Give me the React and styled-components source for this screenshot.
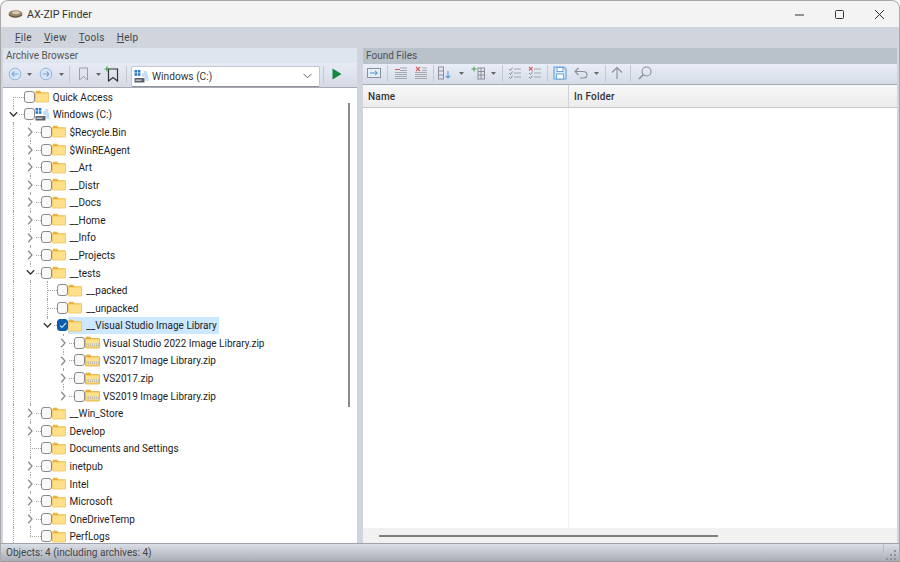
import React from "react"
import styled, { createGlobalStyle } from "styled-components"

const GlobalStyle = createGlobalStyle`
    html, body {
        margin: 0;
        padding: 0;
        background: #fff;
    }
    body {
        font-family: Roboto, "Noto Sans", sans-serif;
        font-size: 10px;
        color: #333;
    }
`

const rows = [
    { name: "Quick Access", level: 0, node: "line", icon: "folder", guides: [] },
    { name: "Windows (C:)", level: 0, node: "open", icon: "drive", guides: [] },
    { name: "$Recycle.Bin", level: 1, node: "closed", icon: "folder", guides: [1] },
    { name: "$WinREAgent", level: 1, node: "closed", icon: "folder", guides: [1] },
    { name: "__Art", level: 1, node: "closed", icon: "folder", guides: [1] },
    { name: "__Distr", level: 1, node: "closed", icon: "folder", guides: [1] },
    { name: "__Docs", level: 1, node: "closed", icon: "folder", guides: [1] },
    { name: "__Home", level: 1, node: "closed", icon: "folder", guides: [1] },
    { name: "__Info", level: 1, node: "closed", icon: "folder", guides: [1] },
    { name: "__Projects", level: 1, node: "closed", icon: "folder", guides: [1] },
    { name: "__tests", level: 1, node: "open", icon: "folder", guides: [1] },
    { name: "__packed", level: 2, node: "line", icon: "folder", guides: [1, 1] },
    { name: "__unpacked", level: 2, node: "line", icon: "folder", guides: [1, 1] },
    { name: "__Visual Studio Image Library", level: 2, node: "open", icon: "folder", guides: [1, 1], checked: true, selected: true, tail: true },
    { name: "Visual Studio 2022 Image Library.zip", level: 3, node: "closed", icon: "zip", guides: [1, 1, 0] },
    { name: "VS2017 Image Library.zip", level: 3, node: "closed", icon: "zip", guides: [1, 1, 0] },
    { name: "VS2017.zip", level: 3, node: "closed", icon: "zip", guides: [1, 1, 0] },
    { name: "VS2019 Image Library.zip", level: 3, node: "closed", icon: "zip", guides: [1, 1, 0], tail: true },
    { name: "__Win_Store", level: 1, node: "closed", icon: "folder", guides: [1] },
    { name: "Develop", level: 1, node: "closed", icon: "folder", guides: [1] },
    { name: "Documents and Settings", level: 1, node: "line", icon: "folder", guides: [1] },
    { name: "inetpub", level: 1, node: "closed", icon: "folder", guides: [1] },
    { name: "Intel", level: 1, node: "closed", icon: "folder", guides: [1] },
    { name: "Microsoft", level: 1, node: "closed", icon: "folder", guides: [1] },
    { name: "OneDriveTemp", level: 1, node: "closed", icon: "folder", guides: [1] },
    { name: "PerfLogs", level: 1, node: "line", icon: "folder", guides: [1] },
]

function FolderIcon() {
    return (
        <svg width="14" height="13" viewBox="0 0 14 13">
            <path d="M0.5 2.5 Q0.5 1 2 1 H5 L6.5 2.5 H13 Q13.5 2.5 13.5 3 V11.5 Q13.5 12 13 12 H1 Q0.5 12 0.5 11.5 Z" fill="#fbd268" stroke="#efc260" strokeWidth="0.8" />
            <path d="M1 1.5 H5 L6.5 3 H1 Z" fill="#eba92e" />
            <rect x="1" y="4" width="12" height="7.5" fill="#fedf8a" />
        </svg>
    )
}

function ZipIcon() {
    return (
        <svg width="15" height="13" viewBox="0 0 15 13">
            <path d="M0.5 2.5 Q0.5 1 2 1 H5 L6.5 2.5 H14 Q14.5 2.5 14.5 3 V11.5 Q14.5 12 14 12 H1 Q0.5 12 0.5 11.5 Z" fill="#fbd268" stroke="#e3ad42" strokeWidth="0.8" />
            <path d="M1 1.5 H5 L6.5 3 H1 Z" fill="#e8a62c" />
            <rect x="1" y="4" width="13" height="3" fill="#fedf8a" />
            <rect x="3" y="7" width="11" height="3.5" fill="#e8e2c8" />
            <path d="M3 8 H14 M3 9.6 H14" stroke="#9a9686" strokeWidth="0.7" strokeDasharray="1 1" />
        </svg>
    )
}

function DriveIcon({ size = 15 }) {
    return (
        <svg width={size} height={size} viewBox="0 0 15 15">
            <rect x="0.5" y="1" width="2.6" height="2.6" fill="#2b79c9" />
            <rect x="3.8" y="1" width="2.6" height="2.6" fill="#2b79c9" />
            <rect x="0.5" y="4.2" width="2.6" height="2.6" fill="#2b79c9" />
            <rect x="3.8" y="4.2" width="2.6" height="2.6" fill="#2b79c9" />
            <rect x="0.5" y="9" width="10" height="4.5" fill="#59626c" />
            <rect x="1.5" y="10.6" width="6" height="1.2" fill="#cfd6dd" />
            <path d="M8 5 H13.5 M8 7 H14 M10 3 H13 M11 9 H14.5 M11.5 11 H14.5" stroke="#8fc0e6" strokeWidth="1.2" />
        </svg>
    )
}

function Chevron({ open }) {
    return open ? (
        <svg width="9" height="7" viewBox="0 0 9 7">
            <path d="M0.8 1.2 L4.5 5 L8.2 1.2" fill="none" stroke="#333" strokeWidth="1.3" />
        </svg>
    ) : (
        <svg width="7" height="10" viewBox="0 0 7 10">
            <path d="M1.2 0.8 L5 5 L1.2 9.2" fill="none" stroke="#8a8a8a" strokeWidth="1.3" />
        </svg>
    )
}

function TreeRow({ row }) {
    return (
        <Row>
            {row.guides.map((on, i) => <Guide key={i} $on={on} />)}
            <Node $first={row.name === "Quick Access"} $last={row.name === "PerfLogs" || row.tail}>
                {row.node !== "line" && <Knob><Chevron open={row.node === "open"} /></Knob>}
            </Node>
            <Check $checked={row.checked}>
                {row.checked && (
                    <svg width="8" height="7" viewBox="0 0 8 7">
                        <path d="M1 3.5 L3 5.5 L7 1" fill="none" stroke="#bcd8f5" strokeWidth="1.2" />
                    </svg>
                )}
            </Check>
            <Entry $selected={row.selected}>
                <EntryIcon>
                    {row.icon === "folder" && <FolderIcon />}
                    {row.icon === "zip" && <ZipIcon />}
                    {row.icon === "drive" && <DriveIcon />}
                </EntryIcon>
                <Name>{row.name}</Name>
            </Entry>
        </Row>
    )
}

function Caret() {
    return <svg width="5" height="3" viewBox="0 0 5 3"><path d="M0 0 H5 L2.5 3 Z" fill="#666" /></svg>
}

function ArrowCircle({ back }) {
    return (
        <svg width="14" height="14" viewBox="0 0 14 14">
            <circle cx="7" cy="7" r="5.8" fill="#d6e6f7" stroke="#8fb4de" />
            <path d={back ? "M10.5 7 H4 M6.5 4.5 L4 7 L6.5 9.5" : "M3.5 7 H10 M7.5 4.5 L10 7 L7.5 9.5"} fill="none" stroke="#7ea6d6" strokeWidth="1.1" />
        </svg>
    )
}

function Lines({ mark }) {
    return (
        <svg width="14" height="14" viewBox="0 0 14 14">
            <path d="M1 6.5 H13 M1 8.5 H13 M1 10.5 H13 M1 12.5 H13" stroke="#a3a7ae" />
            {mark === "dash" && <path d="M6 2 H13 M6 4.5 H13" stroke="#a3a7ae" />}
            {mark === "dash" && <path d="M1 3.5 H6" stroke="#e05a5a" strokeWidth="1.2" />}
            {mark === "x" && <path d="M8 2 H13 M8 4.5 H13" stroke="#a3a7ae" />}
            {mark === "x" && <path d="M2 1 L6 5 M6 1 L2 5" stroke="#e05a5a" strokeWidth="1.1" />}
        </svg>
    )
}

function CheckList({ x }) {
    return (
        <svg width="14" height="14" viewBox="0 0 14 14">
            <path d="M6 3 H13 M6 7 H13 M6 11 H13" stroke="#a3a7ae" strokeWidth="1.1" />
            {x ? (
                <path d="M1 1 L4.5 4.5 M4.5 1 L1 4.5" stroke="#e05a5a" strokeWidth="1.1" />
            ) : (
                <path d="M1 3 L2.5 4.5 L4.5 1.5" fill="none" stroke="#8a8e96" />
            )}
            <path d="M1 7 L2.5 8.5 L4.5 5.5 M1 11 L2.5 12.5 L4.5 9.5" fill="none" stroke="#8a8e96" />
        </svg>
    )
}

export default function App() {
    return (
        <Page>
            <GlobalStyle />
            <TitleBar>
                <AppIcon>
                    <svg width="15" height="10" viewBox="0 0 15 10">
                        <ellipse cx="7.5" cy="5" rx="7" ry="3.8" fill="#9b8468" />
                        <ellipse cx="8" cy="3.6" rx="4" ry="1.6" fill="#d8cbb6" />
                        <path d="M1 6 Q7 10 14 6" fill="none" stroke="#5f4e3a" />
                    </svg>
                </AppIcon>
                <Title>AX-ZIP Finder</Title>
                <WindowButton>
                    <svg width="11" height="11" viewBox="0 0 11 11"><path d="M1 6 H10" stroke="#333" /></svg>
                </WindowButton>
                <WindowButton>
                    <svg width="11" height="11" viewBox="0 0 11 11"><rect x="1.5" y="1.5" width="8" height="8" rx="1" fill="none" stroke="#333" /></svg>
                </WindowButton>
                <WindowButton>
                    <svg width="11" height="11" viewBox="0 0 11 11"><path d="M1 1 L10 10 M10 1 L1 10" stroke="#333" /></svg>
                </WindowButton>
            </TitleBar>
            <MenuBar>
                <MenuItem><u>F</u>ile</MenuItem>
                <MenuItem><u>V</u>iew</MenuItem>
                <MenuItem><u>T</u>ools</MenuItem>
                <MenuItem><u>H</u>elp</MenuItem>
            </MenuBar>
            <Panes>
                <LeftPane>
                    <LeftHeading>Archive Browser</LeftHeading>
                    <LeftToolbar>
                        <Tool $w={18}><ArrowCircle back /></Tool>
                        <Tool $w={11}><Caret /></Tool>
                        <Tool $w={22}><ArrowCircle /></Tool>
                        <Tool $w={9}><Caret /></Tool>
                        <Sep $w={6} />
                        <Tool $w={23}>
                            <svg width="11" height="14" viewBox="0 0 11 14"><path d="M1.5 1 H9.5 V13 L5.5 9.5 L1.5 13 Z" fill="none" stroke="#9a9ea6" /></svg>
                        </Tool>
                        <Tool $w={6}><Caret /></Tool>
                        <Tool $w={21}>
                            <svg width="15" height="16" viewBox="0 0 15 16">
                                <path d="M4.5 3 H13.5 V15 L9 11.5 L4.5 15 Z" fill="none" stroke="#333" strokeWidth="1.2" />
                                <path d="M3 0.5 V5.5 M0.5 3 H5.5" stroke="#3fa14a" strokeWidth="1.2" />
                            </svg>
                        </Tool>
                        <Sep $w={9} />
                        <Combo>
                            <DriveIcon size={15} />
                            <ComboText>Windows (C:)</ComboText>
                            <svg width="9" height="6" viewBox="0 0 9 6"><path d="M0.5 0.8 L4.5 4.8 L8.5 0.8" fill="none" stroke="#666" /></svg>
                        </Combo>
                        <Sep $w={6} />
                        <Tool $w={22}>
                            <svg width="10" height="12" viewBox="0 0 10 12"><path d="M0.5 0.5 L9.5 6 L0.5 11.5 Z" fill="#138a3b" /></svg>
                        </Tool>
                    </LeftToolbar>
                    <TreePanel>
                        <TreeList>
                            {rows.map(row => <TreeRow key={row.name} row={row} />)}
                        </TreeList>
                        <TreeScroll><TreeThumb /></TreeScroll>
                    </TreePanel>
                </LeftPane>
                <Splitter />
                <RightPane>
                    <RightHeading>Found Files</RightHeading>
                    <RightToolbar>
                        <Tool $w={18}>
                            <svg width="14" height="10" viewBox="0 0 14 10">
                                <rect x="0.5" y="0.5" width="13" height="9" fill="#e4ecf6" stroke="#8a9099" />
                                <path d="M3 5 H10 M8 3 L10.5 5 L8 7" fill="none" stroke="#4c8fd0" />
                            </svg>
                        </Tool>
                        <Sep $w={8} />
                        <Tool $w={20}><Lines mark="dash" /></Tool>
                        <Tool $w={19}><Lines mark="x" /></Tool>
                        <Sep $w={6} />
                        <Tool $w={18}>
                            <svg width="14" height="14" viewBox="0 0 14 14">
                                <rect x="0.5" y="1" width="5" height="12" fill="none" stroke="#8a8e96" />
                                <path d="M0.5 5 H5.5 M0.5 9 H5.5" stroke="#8a8e96" />
                                <path d="M10 5 V12 M7.8 9.8 L10 12 L12.2 9.8" fill="none" stroke="#5a9ad8" strokeWidth="1.1" />
                            </svg>
                        </Tool>
                        <Tool $w={15}><Caret /></Tool>
                        <Tool $w={18}>
                            <svg width="15" height="14" viewBox="0 0 15 14">
                                <path d="M3 0.5 V5.5 M0.5 3 H5.5" stroke="#3fa14a" />
                                <rect x="7" y="2" width="6.5" height="11" fill="none" stroke="#8a8e96" />
                                <path d="M7 5.5 H13.5 M7 9 H13.5 M10 2 V13" stroke="#8a8e96" />
                            </svg>
                        </Tool>
                        <Tool $w={12}><Caret /></Tool>
                        <Sep $w={6} />
                        <Tool $w={20}><CheckList /></Tool>
                        <Tool $w={19}><CheckList x /></Tool>
                        <Sep $w={6} />
                        <Tool $w={20}>
                            <svg width="14" height="14" viewBox="0 0 14 14">
                                <path d="M1 1 H11 L13 3 V13 H1 Z" fill="#dbe8f6" stroke="#6aa3dc" strokeWidth="1.2" />
                                <rect x="4" y="1.5" width="6" height="4" fill="#fff" stroke="#6aa3dc" />
                                <rect x="3.5" y="8" width="7" height="5" fill="#fff" stroke="#6aa3dc" />
                            </svg>
                        </Tool>
                        <Tool $w={22}>
                            <svg width="14" height="12" viewBox="0 0 14 12">
                                <path d="M4.5 1 L1 4.5 L4.5 8 M1 4.5 H9 Q13 4.5 13 8 Q13 11 9 11 H6" fill="none" stroke="#8a8e96" strokeWidth="1.1" />
                            </svg>
                        </Tool>
                        <Tool $w={9}><Caret /></Tool>
                        <Sep $w={8} />
                        <Tool $w={16}>
                            <svg width="12" height="14" viewBox="0 0 12 14"><path d="M6 13 V1.5 M1 6.5 L6 1.5 L11 6.5" fill="none" stroke="#8a8e96" strokeWidth="1.1" /></svg>
                        </Tool>
                        <Sep $w={10} />
                        <Tool $w={20}>
                            <svg width="14" height="14" viewBox="0 0 14 14">
                                <circle cx="8.5" cy="5.5" r="4.5" fill="none" stroke="#8a8e96" strokeWidth="1.1" />
                                <path d="M5.2 8.8 L1 13" stroke="#8a8e96" strokeWidth="1.6" />
                            </svg>
                        </Tool>
                    </RightToolbar>
                    <ListPanel>
                        <ListHeader>
                            <HeaderCell $w={206}>Name</HeaderCell>
                            <HeaderCell>In Folder</HeaderCell>
                        </ListHeader>
                        <ListBody>
                            <ListColumn $w={206} />
                            <ListColumn />
                        </ListBody>
                        <HScroll><HThumb /></HScroll>
                    </ListPanel>
                </RightPane>
            </Panes>
            <StatusBar>
                <StatusText>Objects: 4 (including archives: 4)</StatusText>
                <Grip>
                    <svg width="12" height="12" viewBox="0 0 12 12" fill="#8d929b">
                        <rect x="9" y="1" width="2" height="2" />
                        <rect x="5" y="5" width="2" height="2" />
                        <rect x="9" y="5" width="2" height="2" />
                        <rect x="1" y="9" width="2" height="2" />
                        <rect x="5" y="9" width="2" height="2" />
                        <rect x="9" y="9" width="2" height="2" />
                    </svg>
                </Grip>
            </StatusBar>
        </Page>
    )
}

const Page = styled.div`
    width: 900px;
    height: 562px;
    box-sizing: border-box;
    display: flex;
    flex-direction: column;
    overflow: hidden;
    background: #d0d5dd;
    border-top: 1px solid #a9a9a9;
    border-left: 1px solid #a9a9a9;
    border-right: 1px solid #a9a9a9;
    border-bottom: 1px solid #9a9a9a;
    border-radius: 8px 8px 0 0;
`

const TitleBar = styled.div`
    height: 26px;
    flex: none;
    display: flex;
    align-items: center;
    padding-left: 7px;
    background: #f3f3f3;
`

const AppIcon = styled.div`
    width: 19px;
    display: flex;
    align-items: center;
`

const Title = styled.div`
    flex: 1;
    font-size: 10.7px;
    color: #333;
`

const WindowButton = styled.div`
    width: 40px;
    height: 26px;
    display: flex;
    align-items: center;
    justify-content: center;
`

const MenuBar = styled.div`
    height: 21px;
    flex: none;
    display: flex;
    align-items: center;
    padding: 0 0 1px 14px;
    box-sizing: border-box;
    gap: 12px;
    background: #d0d5dd;
`

const MenuItem = styled.span`
    font-size: 10px;
    letter-spacing: 0.3px;
    color: #444;
`

const Panes = styled.div`
    flex: 1;
    min-height: 0;
    display: flex;
    padding: 0 2px;
`

const LeftPane = styled.div`
    width: 354px;
    flex: none;
    display: flex;
    flex-direction: column;
`

const LeftHeading = styled.div`
    height: 15px;
    flex: none;
    padding-left: 3px;
    font-size: 10px;
    line-height: 15px;
    color: #555;
    background: #dfe5ef;
`

const LeftToolbar = styled.div`
    height: 25px;
    flex: none;
    display: flex;
    align-items: center;
    padding: 0 0 2px 3px;
    background: linear-gradient(#e6ebf5, #d5dae5);
    border-bottom: 1px solid #a8abb1;
    box-sizing: border-box;
`

const Tool = styled.div`
    width: ${props => props.$w}px;
    height: 100%;
    flex: none;
    display: flex;
    align-items: center;
    justify-content: center;
`

const Sep = styled.div`
    width: ${props => props.$w}px;
    height: 17px;
    flex: none;
    &::before {
        content: "";
        display: block;
        width: 1px;
        height: 100%;
        margin: 0 auto;
        background: #c3c8d1;
    }
`

const Combo = styled.div`
    width: 189px;
    height: 21px;
    box-sizing: border-box;
    flex: none;
    margin-top: 4px;
    display: flex;
    align-items: center;
    gap: 3px;
    padding: 0 7px 0 2px;
    background: #fff;
    border: 1px solid #c4c7cd;
    border-bottom-color: #8f9298;
    border-radius: 2px;
`

const ComboText = styled.span`
    flex: 1;
    font-size: 10.2px;
    line-height: 14px;
    padding-top: 1px;
    color: #333;
`

const TreePanel = styled.div`
    flex: 1;
    min-height: 0;
    display: flex;
    background: #fff;
`

const TreeList = styled.div`
    flex: 1;
    min-width: 0;
    overflow: hidden;
    padding-left: 2px;
`

const Row = styled.div`
    height: 17.58px;
    display: flex;
    align-items: center;
`

const Guide = styled.div`
    width: 16.75px;
    height: 100%;
    flex: none;
    box-sizing: border-box;
    padding-left: 8px;
    &::before {
        content: "";
        display: ${props => (props.$on ? "block" : "none")};
        height: 100%;
        border-left: 1px dotted #a6a6a6;
    }
`

const Node = styled.div`
    width: 16.75px;
    height: 100%;
    flex: none;
    position: relative;
    &::before {
        content: "";
        position: absolute;
        left: 8px;
        top: ${props => (props.$first ? "50%" : "0")};
        bottom: ${props => (props.$last ? "50%" : "0")};
        border-left: 1px dotted #a6a6a6;
    }
    &::after {
        content: "";
        position: absolute;
        left: 8px;
        right: -2px;
        top: 50%;
        border-top: 1px dotted #a6a6a6;
    }
`

const Knob = styled.div`
    position: absolute;
    z-index: 1;
    left: 3px;
    top: 3px;
    width: 11px;
    height: 12px;
    display: flex;
    align-items: center;
    justify-content: center;
    background: #fff;
`

const Check = styled.div`
    position: relative;
    z-index: 1;
    width: 11px;
    height: 12px;
    box-sizing: border-box;
    flex: none;
    margin-left: 2px;
    display: flex;
    align-items: center;
    justify-content: center;
    background: ${props => (props.$checked ? "#0b5cad" : "#f8f8f8")};
    border: 1px solid ${props => (props.$checked ? "#0b5cad" : "#8a8a8a")};
    border-radius: 3px;
`

const Entry = styled.div`
    height: 17px;
    display: flex;
    align-items: center;
    padding-right: 2px;
    background: ${props => (props.$selected ? "#cce8ff" : "transparent")};
`

const EntryIcon = styled.div`
    width: 18px;
    box-sizing: border-box;
    display: flex;
    align-items: center;
`

const Name = styled.span`
    font-size: 10px;
    line-height: 14px;
    padding-top: 2px;
    white-space: nowrap;
    color: #222;
`

const TreeScroll = styled.div`
    width: 14px;
    flex: none;
    display: flex;
    justify-content: center;
    padding-right: 3px;
    box-sizing: border-box;
`

const TreeThumb = styled.div`
    width: 2px;
    height: 304px;
    margin-top: 15px;
    background: #8a8a8a;
`

const Splitter = styled.div`
    width: 6px;
    flex: none;
    background: #d0d5dd;
`

const RightPane = styled.div`
    flex: 1;
    min-width: 0;
    display: flex;
    flex-direction: column;
`

const RightHeading = styled.div`
    height: 16px;
    flex: none;
    padding-left: 3px;
    font-size: 10px;
    line-height: 16px;
    color: #4d5158;
    background: #b9c1cb;
`

const RightToolbar = styled.div`
    height: 21px;
    box-sizing: border-box;
    flex: none;
    display: flex;
    align-items: center;
    padding: 0 0 2px 2px;
    background: linear-gradient(#e9eef8, #d5dbe7);
    border-bottom: 1px solid #a9acb2;
`

const ListPanel = styled.div`
    flex: 1;
    min-height: 0;
    display: flex;
    flex-direction: column;
    background: #fff;
`

const ListHeader = styled.div`
    height: 22px;
    flex: none;
    display: flex;
    background: linear-gradient(#f7f7f7, #ececec);
    border-bottom: 1px solid #c6c6c6;
`

const HeaderCell = styled.div`
    width: ${props => (props.$w ? `${props.$w}px` : "auto")};
    flex: ${props => (props.$w ? "none" : "1")};
    box-sizing: border-box;
    padding: 2px 0 0 5px;
    font-size: 10px;
    font-weight: 500;
    letter-spacing: 0.2px;
    line-height: 20px;
    color: #333;
    border-right: ${props => (props.$w ? "1px solid #d2d2d2" : "none")};
`

const ListBody = styled.div`
    flex: 1;
    min-height: 0;
    display: flex;
`

const ListColumn = styled.div`
    width: ${props => (props.$w ? `${props.$w}px` : "auto")};
    flex: ${props => (props.$w ? "none" : "1")};
    box-sizing: border-box;
    border-right: ${props => (props.$w ? "1px solid #f0f0f0" : "none")};
`

const HScroll = styled.div`
    height: 15px;
    flex: none;
    display: flex;
    align-items: center;
    padding-left: 16px;
    background: #f1f1f1;
`

const HThumb = styled.div`
    width: 339px;
    height: 2px;
    background: #7f7f7f;
`

const StatusBar = styled.div`
    height: 18px;
    flex: none;
    display: flex;
    align-items: center;
    padding-left: 5px;
    background: linear-gradient(#dadee6, #a8adb7);
    border-top: 1px solid #9fa2a8;
    box-sizing: border-box;
`

const StatusText = styled.span`
    flex: 1;
    font-size: 10.1px;
    color: #444;
`

const Grip = styled.div`
    width: 14px;
    height: 100%;
    padding-left: 1px;
    display: flex;
    align-items: flex-end;
    border-left: 1px solid #b9bdc5;
`
